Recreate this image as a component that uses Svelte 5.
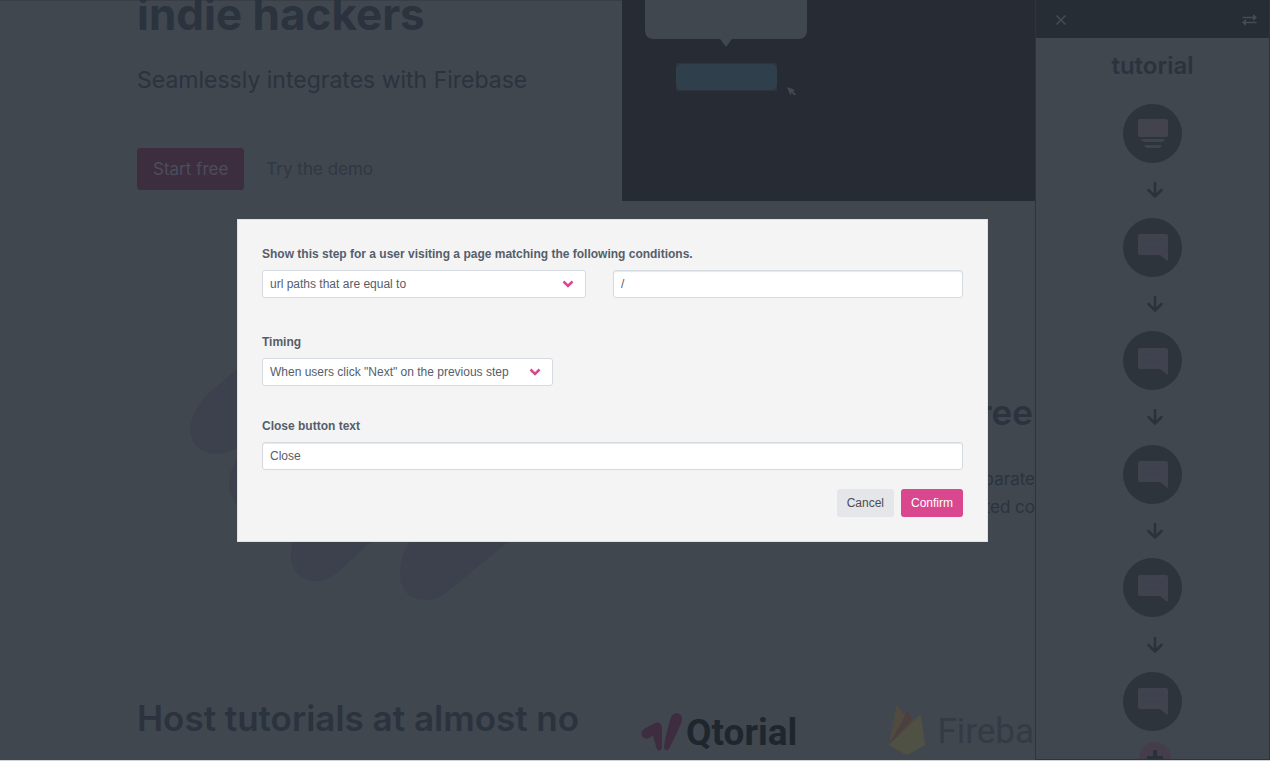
<script>
  let condition = $state('equal');
  let timing = $state('next');
  let path = $state('/');
  let closeText = $state('Close');

  const steps = ['modal', 'hint', 'hint', 'hint', 'hint', 'hint'];
</script>

<div class="page">
  <main>
    <section class="hero">
      <div class="intro">
        <h1>indie hackers</h1>
        <p>Seamlessly integrates with Firebase</p>
        <div class="actions">
          <a class="cta primary" href="#start">Start free</a>
          <a class="cta" href="#demo">Try the demo</a>
        </div>
      </div>
      <svg class="preview" viewBox="0 0 648 201" aria-hidden="true">
        <rect width="648" height="201" fill="#272b33" />
        <path d="M23 0v30q0 9 9 9h66l6 8 6-8h66q9 0 9-9V0z" fill="#41474f" />
        <rect x="54" y="63" width="101" height="28" fill="#31343d" />
        <rect x="54" y="64" width="101" height="26" rx="6" fill="#2f404c" />
        <path d="M165 87l8 3-2 1.500 3 3-1.500 1-3-3-1 3z" fill="#444a53" />
      </svg>
    </section>

    <section class="feature">
      <svg class="blobs" viewBox="137 340 400 262" aria-hidden="true">
        <g fill="#3d414e">
          <path d="M300 330C270 340 226 378 208 394C188 414 184 438 201 450C216 458 230 452 240 446L310 400z" />
          <path d="M290 430C250 440 229 460 229 484C229 500 238 508 250 510L310 480z" />
          <path d="M320 520C298 530 291 540 291 554C291 572 302 581 317 581C325 581 332 577 338 572L372 541L400 510z" />
          <path d="M440 510C414 530 400 550 400 574C400 592 412 600 426 600C436 600 444 595 451 589L509 541L540 510z" />
        </g>
      </svg>
      <div class="copy">
        <h2>free</h2>
        <p>separate<br />hosted co</p>
      </div>
    </section>

    <section class="hosting">
      <h2>Host tutorials at almost no</h2>
      <div class="brands">
        <div class="brand qtorial">
          <svg width="42" height="40" viewBox="0 0 42 40" aria-hidden="true">
            <g fill="#3e2c41">
              <path d="M3 17L13 11.500C18 9 21 12 21 17V35.500C21 39.500 16 39.500 15.500 36L12 23.500L8 26C5 27.500 1 26 .5 22.500C.2 20 1 18.500 3 17z" />
              <path d="M30 5C32 -1 42 0 41 8C40 13 31 31 28.500 36C27 39.500 22.500 38.500 23 34.500C24 27 28 11 30 5z" />
            </g>
          </svg>
          <span>Qtorial</span>
        </div>
        <div class="brand firebase">
          <svg width="37" height="50" viewBox="0 0 37 50" aria-hidden="true">
            <path d="M0 40L7 2Q8-1 10 2L14 10L17 7Q18 6 19 7L23 15L30 11Q31 10 32 12L36 40L20 49Q18 50 16 49z" fill="#514a40" />
            <path d="M0 40L15 13L17 7Q18 6 19 7L23 15z" fill="#4b3f40" />
            <path d="M0 40L31 11Q32 10 32 12L36 40L20 49Q18 50 16 49z" fill="#505145" />
          </svg>
          <span>Firebase</span>
        </div>
      </div>
    </section>
  </main>

  <aside>
    <header>
      <button aria-label="Close panel">
        <svg width="12" height="12" viewBox="0 0 12 12"><path d="M1.500 1.500l9 9M10.500 1.500l-9 9" /></svg>
      </button>
      <button aria-label="Switch side">
        <svg width="15" height="12" viewBox="0 0 15 12">
          <path d="M.5 3.500h11M3.500 8.500h11" />
          <path class="solid" d="M11 0l4 3.500-4 3.500zM4 5l-4 3.500 4 3.500z" />
        </svg>
      </button>
    </header>
    <h2>tutorial</h2>
    <div class="steps">
      {#each steps as kind, i}
        {#if i > 0}
          <svg class="arrow" width="16" height="16" viewBox="0 0 16 16" aria-hidden="true"><path d="M8 1v13M1.500 8L8 14.500 14.500 8" /></svg>
        {/if}
        <button class="step" aria-label={kind === 'modal' ? 'Modal step' : 'Hint step'}>
          <svg width="30" height="30" viewBox="0 0 30 30">
            {#if kind === 'modal'}
              <rect width="30" height="18" rx="2" fill="#42434d" />
              <path d="M3 20h24q-1 3-3 3H6q-2 0-3-3zM6 26h18q-1 3-3 3H9q-2 0-3-3z" fill="#3b444f" />
            {:else}
              <path d="M2 2h26q2 0 2 2v24q-1 1-2 0l-6-5H2q-2 0-2-2V4q0-2 2-2z" fill="#40424e" />
              <path d="M6 9h18M6 15h12" stroke="#3a434f" stroke-width="2.500" stroke-linecap="round" />
            {/if}
          </svg>
        </button>
      {/each}
    </div>
    <button class="add" aria-label="Add step">
      <svg width="16" height="16" viewBox="0 0 16 16"><path d="M8 0v16M0 8h16" /></svg>
    </button>
  </aside>
</div>

<div class="overlay">
  <form class="dialog" onsubmit={(e) => e.preventDefault()}>
    <div class="field">
      <label for="condition">Show this step for a user visiting a page matching the following conditions.</label>
      <div class="row">
        <div class="select match">
          <select id="condition" bind:value={condition}>
            <option value="equal">url paths that are equal to</option>
          </select>
          <svg width="12" height="8" viewBox="0 0 12 8" aria-hidden="true"><path d="M1.500 1.500L6 6l4.500-4.500" /></svg>
        </div>
        <input class="path" type="text" aria-label="Path" bind:value={path} />
      </div>
    </div>
    <div class="field">
      <label for="timing">Timing</label>
      <div class="select timing">
        <select id="timing" bind:value={timing}>
          <option value="next">When users click "Next" on the previous step</option>
        </select>
        <svg width="12" height="8" viewBox="0 0 12 8" aria-hidden="true"><path d="M1.500 1.500L6 6l4.500-4.500" /></svg>
      </div>
    </div>
    <div class="field">
      <label for="close">Close button text</label>
      <input id="close" type="text" bind:value={closeText} />
    </div>
    <div class="buttons">
      <button type="button">Cancel</button>
      <button type="submit" class="confirm">Confirm</button>
    </div>
  </form>
</div>

<style>
  :global(body) {
    background: #d0d2d6;
    font-family: Inter, 'Liberation Sans', sans-serif;
  }
  * {
    box-sizing: border-box;
  }
  h1, h2, p {
    margin: 0;
  }
  button {
    border: 0;
    padding: 0;
    background: none;
    font: inherit;
  }
  svg {
    display: block;
    flex: none;
  }
  .page {
    display: flex;
    height: calc(100vh - 1px);
    overflow: hidden;
    background: #40474f;
    color: #2b333e;
    box-shadow: inset 0 1px #3a3e47;
  }
  main {
    flex: 1;
    min-width: 0;
    overflow: hidden;
    padding-left: 137px;
    display: flex;
    flex-direction: column;
    white-space: nowrap;
  }
  .hero {
    display: flex;
    height: 201px;
  }
  .intro {
    flex: 0 0 485px;
  }
  h1 {
    font-size: 44px;
    line-height: 28px;
    font-weight: 700;
  }
  .intro p {
    margin-top: 34px;
    font-size: 23px;
    line-height: 36px;
  }
  .actions {
    display: flex;
    gap: 6px;
    margin-top: 50px;
  }
  .cta {
    padding: 0 15px;
    border: 1px solid #3e4856;
    border-radius: 3px;
    font-size: 17px;
    line-height: 40px;
    color: #303843;
    text-decoration: none;
  }
  .primary {
    background: #3c2d3f;
    border-color: #3c2d3f;
    color: #4c4d5b;
  }
  .preview {
    width: 648px;
    height: 201px;
  }
  .feature {
    display: flex;
    justify-content: space-between;
    height: 488px;
    padding-top: 139px;
  }
  .blobs {
    width: 400px;
    height: 262px;
  }
  .copy {
    padding-top: 50px;
    text-align: right;
  }
  .copy h2 {
    padding-right: 2px;
    font-size: 35px;
    line-height: 44px;
    font-weight: 600;
  }
  .copy p {
    margin-top: 31px;
    font-size: 17px;
    line-height: 28px;
  }
  .hosting {
    display: flex;
  }
  .hosting h2 {
    flex: 0 0 504px;
    font-size: 35px;
    line-height: 58px;
    font-weight: 600;
  }
  .brands {
    display: flex;
    gap: 92px;
    padding-top: 16px;
  }
  .brand {
    display: flex;
  }
  .qtorial {
    gap: 3px;
    padding-top: 7px;
    color: #1f262e;
    font: 700 37px/42px Roboto, sans-serif;
  }
  .firebase {
    gap: 11px;
    color: #333b45;
    font: 400 35px/54px Roboto, sans-serif;
  }
  aside {
    flex: 0 0 235px;
    overflow: hidden;
    display: flex;
    flex-direction: column;
    align-items: center;
    border: 1px solid #2d343f;
    border-top: 0;
    background: #40474f;
  }
  header {
    align-self: stretch;
    flex: none;
    display: flex;
    align-items: center;
    justify-content: space-between;
    height: 38px;
    padding: 2px 12px 0 19px;
    background: #272d35;
  }
  header svg {
    fill: none;
    stroke: #454c55;
    stroke-width: 1.500;
  }
  header .solid {
    fill: #454c55;
    stroke: none;
  }
  aside h2 {
    margin-top: 10px;
    font-size: 24px;
    line-height: 36px;
    font-weight: 600;
  }
  .steps {
    flex: none;
    display: flex;
    flex-direction: column;
    justify-content: space-between;
    align-items: center;
    height: 627px;
    margin-top: 20px;
  }
  .step {
    display: flex;
    align-items: center;
    justify-content: center;
    width: 59px;
    height: 59px;
    border-radius: 50%;
    background: #2e343c;
  }
  .arrow {
    margin-left: 4px;
    fill: none;
    stroke: #2a323d;
    stroke-width: 2.500;
    stroke-linecap: round;
    stroke-linejoin: round;
  }
  .add {
    flex: none;
    display: flex;
    align-items: center;
    justify-content: center;
    width: 32px;
    height: 32px;
    margin: 11px 0 0 4px;
    border-radius: 50%;
    background: #453e4a;
  }
  .add svg {
    stroke: #27323b;
    stroke-width: 4;
  }
  .overlay {
    position: fixed;
    inset: 0;
    display: flex;
    align-items: center;
    justify-content: center;
    padding-right: 45px;
  }
  .dialog {
    width: 751px;
    padding: 25px;
    background: #f4f4f4;
    box-shadow: inset 0 0 0 1px #e0e2e5;
    color: #555e6b;
    font-family: 'Liberation Sans', Arial, sans-serif;
    font-size: 12px;
  }
  label {
    display: block;
    margin-bottom: 6px;
    font-weight: 700;
    line-height: 20px;
  }
  .field + .field {
    margin-top: 30px;
  }
  .row {
    display: flex;
    gap: 27px;
    margin-bottom: 34px;
  }
  .select {
    position: relative;
  }
  .select svg {
    position: absolute;
    right: 12px;
    top: 10px;
    fill: none;
    stroke: #d9488f;
    stroke-width: 2.500;
    pointer-events: none;
  }
  .match {
    flex: 0 1 324px;
  }
  .path {
    flex: 1;
    min-width: 0;
  }
  .timing {
    width: 291px;
  }
  select, input {
    display: block;
    width: 100%;
    height: 28px;
    padding: 0 7px;
    appearance: none;
    border: 1px solid #d5dae0;
    border-radius: 3px;
    background: #fff;
    color: #555e6b;
    font: inherit;
  }
  input {
    box-shadow: inset 0 1px 1px #e6e9ec;
  }
  .buttons {
    display: flex;
    justify-content: flex-end;
    gap: 7px;
    margin-top: 19px;
  }
  .buttons button {
    padding: 0 10px;
    border-radius: 3px;
    background: #e5e6ea;
    color: #4a4d54;
    line-height: 28px;
  }
  .buttons .confirm {
    background: #d9488f;
    color: #fff;
  }
</style>
